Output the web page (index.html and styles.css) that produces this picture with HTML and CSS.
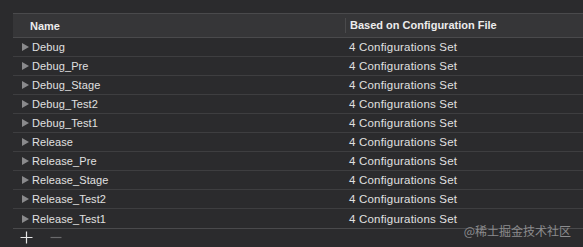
FILE: index.html
```html
<!DOCTYPE html>
<html lang="en">
  <head>
    <meta charset="UTF-8" />
    <title>Configurations</title>
    <link rel="stylesheet" href="styles.css">
  </head>
  <body>
    <div class="table">
      <div class="header">
        <div class="col name">Name</div>
        <div class="col based">Based on Configuration File</div>
      </div>
      <div class="row"><div class="col name"><span class="arrow"></span>Debug</div><div class="col based">4 Configurations Set</div></div>
      <div class="row"><div class="col name"><span class="arrow"></span>Debug_Pre</div><div class="col based">4 Configurations Set</div></div>
      <div class="row"><div class="col name"><span class="arrow"></span>Debug_Stage</div><div class="col based">4 Configurations Set</div></div>
      <div class="row"><div class="col name"><span class="arrow"></span>Debug_Test2</div><div class="col based">4 Configurations Set</div></div>
      <div class="row"><div class="col name"><span class="arrow"></span>Debug_Test1</div><div class="col based">4 Configurations Set</div></div>
      <div class="row"><div class="col name"><span class="arrow"></span>Release</div><div class="col based">4 Configurations Set</div></div>
      <div class="row"><div class="col name"><span class="arrow"></span>Release_Pre</div><div class="col based">4 Configurations Set</div></div>
      <div class="row"><div class="col name"><span class="arrow"></span>Release_Stage</div><div class="col based">4 Configurations Set</div></div>
      <div class="row"><div class="col name"><span class="arrow"></span>Release_Test2</div><div class="col based">4 Configurations Set</div></div>
      <div class="row"><div class="col name"><span class="arrow"></span>Release_Test1</div><div class="col based">4 Configurations Set</div></div>
    </div>
    <div class="footer">
      <div class="buttons">
        <svg class="plus" width="13" height="13" viewBox="0 0 13 13"><path d="M6.5 0.5v12M0.5 6.5h12" stroke="#e6e6e6" stroke-width="1.2" fill="none"/></svg>
        <svg class="minus" width="12" height="13" viewBox="0 0 12 13"><path d="M0.5 6.5h11" stroke="#6a6a6c" stroke-width="1.2" fill="none"/></svg>
      </div>
    </div>
    <div class="watermark">@稀土掘金技术社区</div>
  </body>
</html>
```

FILE: styles.css
```css
/* page */
body {
  position: relative;
  margin: 0;
  width: 583px;
  height: 247px;
  background: #2b2b2d;
  font-family: "Liberation Sans", Arial, sans-serif;
  font-size: 11px;
  color: #e0e0e0;
  padding: 13px 0 0 13px;
  box-sizing: border-box;
  overflow: hidden;
}

/* table */
.table {
  border-top: 1px solid #4a4a4c;
  border-bottom: 1px solid #4a4a4c;
}

.header,
.row {
  display: flex;
  align-items: center;
}

.header {
  height: 23px;
  background: #363638;
  font-weight: bold;
  color: #ececec;
  border-bottom: 1px solid #4a4a4c;
}

.row {
  height: 18px;
  border-bottom: 1px solid #3e3e40;
}

.row:last-child {
  border-bottom: none;
  height: 19px;
}

.col.name {
  width: 332px;
  box-sizing: border-box;
  display: flex;
  align-items: center;
}

.header .col.name {
  padding-left: 17px;
}

.row .col.name {
  padding-left: 9px;
  letter-spacing: 0.1px;
}

.col.based {
  padding-left: 4px;
}

.header .col.based {
  border-left: 1px solid #4a4a4c;
  height: 15px;
  line-height: 15px;
}

.row .col.based {
  font-size: 11.5px;
  letter-spacing: 0.2px;
}

/* disclosure triangle */
.arrow {
  width: 0;
  height: 0;
  border-top: 4px solid transparent;
  border-bottom: 4px solid transparent;
  border-left: 7px solid #8a8a8c;
  margin-right: 3px;
}

/* footer */
.footer {
  display: flex;
  align-items: center;
  height: 17px;
}

.buttons {
  display: flex;
  align-items: center;
  gap: 17px;
  padding-left: 7px;
}

/* watermark sits over the bottom border */
.watermark {
  position: absolute;
  right: 12px;
  top: 222px;
  font-family: "Noto Sans CJK SC", sans-serif;
  font-size: 12px;
  color: #8c8c8e;
}
```
